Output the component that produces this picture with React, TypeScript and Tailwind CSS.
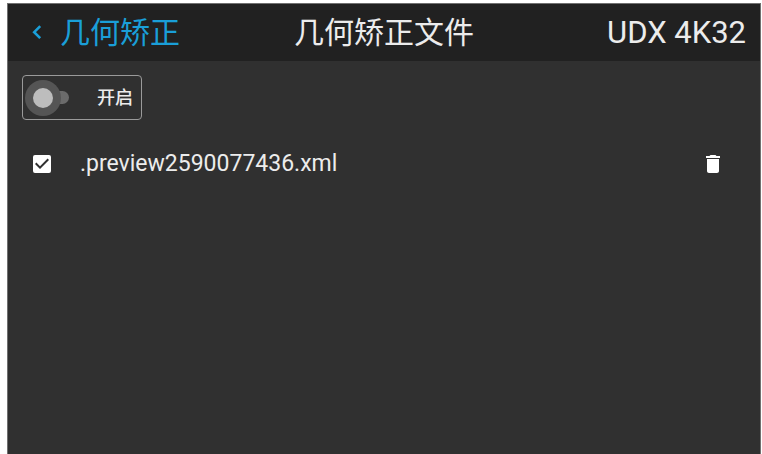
import React, { useState } from 'react';
import { MdCheckBox, MdCheckBoxOutlineBlank, MdDelete } from 'react-icons/md';

interface WarpFile {
    name: string;
    selected: boolean;
}

const initialFiles: WarpFile[] = [{ name: '.preview2590077436.xml', selected: true }];

export default function WarpFiles() {
    const [enabled, setEnabled] = useState(false);
    const [files, setFiles] = useState<WarpFile[]>(initialFiles);

    const toggleFile = (name: string) => {
        setFiles(files.map((f) => (f.name === name ? { ...f, selected: !f.selected } : f)));
    };

    const removeFile = (name: string) => {
        setFiles(files.filter((f) => f.name !== name));
    };

    return (
        <div className="flex min-h-screen bg-white pt-[3px] pl-[7px] pr-px font-[Roboto,'Noto_Sans_CJK_SC',sans-serif] text-[#ececec]">
            <div className="flex-1 border-x border-t border-[#707070] bg-[#303030]">
                <header className="grid h-[57px] grid-cols-[1fr_auto_1fr] items-center bg-[#212121] px-3.5 text-[30px] leading-10">
                    <a href="#geometry" className="flex items-center gap-2.5 text-[#1a9fd8]">
                        <svg
                            viewBox="0 0 28 28"
                            fill="none"
                            stroke="currentColor"
                            strokeWidth="2.6"
                            aria-hidden="true"
                            className="h-7 w-7"
                        >
                            <path d="M18.2 7.2 12.2 13.2l6 6" />
                        </svg>
                        <span>几何矫正</span>
                    </a>
                    <h1>几何矫正文件</h1>
                    <span className="text-right text-[31px]">UDX 4K32</span>
                </header>

                <main className="px-3.5 pt-3.5">
                    <label className="inline-flex h-[45px] cursor-pointer items-center rounded-sm border border-[#9a9a9a] pr-2 text-[18px] font-medium">
                        <span className="relative flex h-9 w-[46px] items-center">
                            <input
                                type="checkbox"
                                role="switch"
                                checked={enabled}
                                onChange={() => setEnabled(!enabled)}
                                className="peer ml-3 h-[13px] w-[34px] cursor-pointer appearance-none rounded-full bg-[#6b6b6b] outline-none"
                            />
                            <span className="pointer-events-none absolute left-0.5 top-0 flex h-9 w-9 items-center justify-center rounded-full bg-[#555555] peer-checked:left-3.5">
                                <span className="h-5 w-5 rounded-full bg-[#bdbdbd]" />
                            </span>
                        </span>
                        <span className="ml-7">开启</span>
                    </label>

                    <ul className="mt-6">
                        {files.map((file) => (
                            <li key={file.name} className="flex h-10 items-center pl-2 pr-[21px]">
                                <label className="flex cursor-pointer items-center gap-6.5 text-[23px]">
                                    <input
                                        type="checkbox"
                                        checked={file.selected}
                                        onChange={() => toggleFile(file.name)}
                                        className="sr-only"
                                    />
                                    {file.selected ? (
                                        <MdCheckBox className="h-6 w-6 text-white" />
                                    ) : (
                                        <MdCheckBoxOutlineBlank className="h-6 w-6 text-white" />
                                    )}
                                    <span>{file.name}</span>
                                </label>
                                <button
                                    type="button"
                                    aria-label="删除"
                                    onClick={() => removeFile(file.name)}
                                    className="ml-auto cursor-pointer text-white"
                                >
                                    <MdDelete className="h-6 w-6" />
                                </button>
                            </li>
                        ))}
                    </ul>
                </main>
            </div>
        </div>
    );
}
